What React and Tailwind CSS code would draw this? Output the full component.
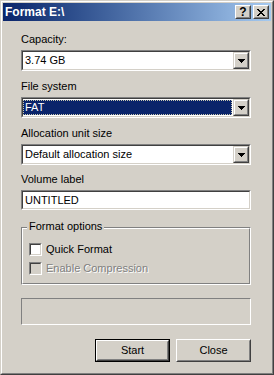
import React from 'react'

const font = { fontFamily: '"Liberation Sans", Arial, sans-serif' }

function Sunken({ className = '', children }) {
  return (
    <div className={`border border-t-[#808080] border-l-[#808080] border-b-white border-r-white ${className}`}>
      <div className="h-full border border-t-[#404040] border-l-[#404040] border-b-[#d4d0c8] border-r-[#d4d0c8] bg-white flex">
        {children}
      </div>
    </div>
  )
}

function DropButton() {
  return (
    <div className="w-[16px] h-full border border-t-[#d4d0c8] border-l-[#d4d0c8] border-b-[#404040] border-r-[#404040]">
      <div className="h-full border border-t-white border-l-white border-b-[#808080] border-r-[#808080] bg-[#d4d0c8] flex items-center justify-center">
        <svg width="7" height="4" viewBox="0 0 7 4" shapeRendering="crispEdges">
          <path d="M0 0h7v1h-1v1h-1v1h-1v1h-1v-1h-1v-1h-1v-1h-1z" fill="#000" />
        </svg>
      </div>
    </div>
  )
}

function Combo({ value, selected }) {
  return (
    <Sunken className="h-[21px]">
      <div className="flex-1 flex items-center">
        {selected ? (
          <div className="mr-[1px] h-[15px] flex-1 flex items-center bg-[#0a246a] text-white border border-dotted border-[#c8c8b0] pl-[1px]">
            {value}
          </div>
        ) : (
          <span className="pl-[2px]">{value}</span>
        )}
      </div>
      <DropButton />
    </Sunken>
  )
}

function Field({ label, children, className = '' }) {
  return (
    <div className={`flex flex-col ${className}`}>
      <div className="h-[13px] leading-[13px]">{label}</div>
      <div className="mt-[4px]">{children}</div>
    </div>
  )
}

function Checkbox({ label, disabled }) {
  return (
    <div className="flex items-center h-[13px]">
      <div className="w-[13px] h-[13px] border border-t-[#808080] border-l-[#808080] border-b-white border-r-white">
        <div className={`h-full border border-t-[#404040] border-l-[#404040] border-b-[#d4d0c8] border-r-[#d4d0c8] ${disabled ? 'bg-[#d4d0c8]' : 'bg-white'}`} />
      </div>
      <span className={`ml-[4px] leading-[13px] ${disabled ? 'text-[#808080] [text-shadow:1px_1px_0_#fff]' : ''}`}>{label}</span>
    </div>
  )
}

function Button({ children, isDefault }) {
  const body = (
    <div className="h-full border border-t-white border-l-white border-b-[#404040] border-r-[#404040]">
      <div className="h-full border border-t-[#d4d0c8] border-l-[#d4d0c8] border-b-[#808080] border-r-[#808080] flex items-center justify-center">
        {children}
      </div>
    </div>
  )
  return isDefault ? (
    <div className="w-[75px] h-[23px] border border-black">{body}</div>
  ) : (
    <div className="w-[75px] h-[23px]">{body}</div>
  )
}

function TitleButton({ children }) {
  return (
    <div className="w-[16px] h-[14px] border border-t-white border-l-white border-b-[#404040] border-r-[#404040]">
      <div className="h-full border border-t-[#d4d0c8] border-l-[#d4d0c8] border-b-[#808080] border-r-[#808080] bg-[#d4d0c8] flex items-center justify-center">
        {children}
      </div>
    </div>
  )
}

export default function App() {
  return (
    <div style={font} className="w-[274px] h-[375px] text-[11px] text-black border border-t-[#d4d0c8] border-l-[#d4d0c8] border-b-[#404040] border-r-[#404040]">
      <div className="h-full border border-t-white border-l-white border-b-[#808080] border-r-[#808080] bg-[#d4d0c8] p-[1px] flex flex-col">
        <div className="h-[18px] flex items-center bg-gradient-to-r from-[#0a246a] to-[#a6caf0] pl-[2px] pr-[2px]">
          <span className="flex-1 font-bold text-white text-[12px] leading-[18px]">Format E:\</span>
          <TitleButton>
            <span className="font-bold text-[12px] leading-none">?</span>
          </TitleButton>
          <div className="w-[2px]" />
          <TitleButton>
            <svg width="8" height="7" viewBox="0 0 8 7" shapeRendering="crispEdges">
              <path d="M0 0h2v1h1v1h2v-1h1v-1h2v1h-1v1h-1v1h-1v1h1v1h1v1h1v1h-2v-1h-1v-1h-2v1h-1v1h-2v-1h1v-1h1v-1h1v-1h-1v-1h-1v-1h-1z" fill="#000" />
            </svg>
          </TitleButton>
        </div>

        <div className="flex flex-col pl-[18px] pt-[12px] w-[248px]">
          <Field label="Capacity:">
            <Combo value="3.74 GB" />
          </Field>
          <Field label="File system" className="mt-[9px]">
            <Combo value="FAT" selected />
          </Field>
          <Field label="Allocation unit size" className="mt-[9px]">
            <Combo value="Default allocation size" />
          </Field>
          <Field label="Volume label" className="mt-[8px]">
            <Sunken className="h-[20px]">
              <span className="self-center pl-[2px]">UNTITLED</span>
            </Sunken>
          </Field>

          <div className="relative mt-[17px] h-[58px] border border-t-[#808080] border-l-[#808080] border-b-white border-r-white">
            <span className="absolute left-[5px] -top-[8px] px-[2px] bg-[#d4d0c8] leading-[13px]">Format options</span>
            <div className="h-full border border-t-white border-l-white border-b-[#808080] border-r-[#808080] pl-[6px] pt-[14px] flex flex-col gap-[6px]">
              <Checkbox label="Quick Format" />
              <Checkbox label="Enable Compression" disabled />
            </div>
          </div>

          <div className="mt-[13px] h-[27px] border border-t-[#808080] border-l-[#808080] border-b-white border-r-white" />

          <div className="mt-[14px] flex justify-end gap-[6px]">
            <Button isDefault>Start</Button>
            <Button>Close</Button>
          </div>
        </div>
      </div>
    </div>
  )
}
